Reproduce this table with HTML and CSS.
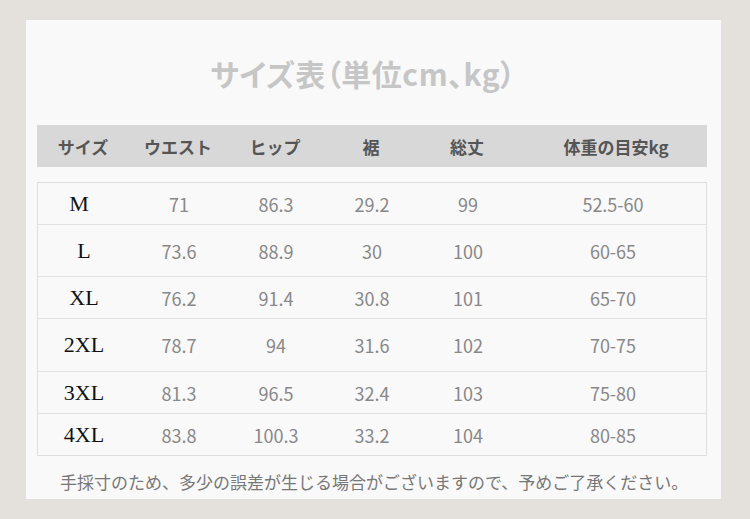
FILE: index.html
```html
<!DOCTYPE html>
<html lang="ja">
<head>
<meta charset="utf-8">
<title>サイズ表</title>
<link rel="stylesheet" href="styles.css">
</head>
<body>
<div class="card">
  <h1 class="title">サイズ表（単位cm、kg）</h1>
  <div class="head">
    <div>サイズ</div><div>ウエスト</div><div>ヒップ</div><div>裾</div><div>総丈</div><div class="w">体重の目安kg</div>
  </div>
  <div class="table">
    <div class="row"><div class="size m">M</div><div>71</div><div>86.3</div><div>29.2</div><div>99</div><div class="w">52.5-60</div></div>
    <div class="row tall"><div class="size">L</div><div>73.6</div><div>88.9</div><div>30</div><div>100</div><div class="w">60-65</div></div>
    <div class="row"><div class="size">XL</div><div>76.2</div><div>91.4</div><div>30.8</div><div>101</div><div class="w">65-70</div></div>
    <div class="row tall"><div class="size">2XL</div><div>78.7</div><div>94</div><div>31.6</div><div>102</div><div class="w">70-75</div></div>
    <div class="row"><div class="size">3XL</div><div>81.3</div><div>96.5</div><div>32.4</div><div>103</div><div class="w">75-80</div></div>
    <div class="row last"><div class="size">4XL</div><div>83.8</div><div>100.3</div><div>33.2</div><div>104</div><div class="w">80-85</div></div>
  </div>
  <p class="note">手採寸のため、多少の誤差が生じる場合がございますので、予めご了承ください。</p>
</div>
</body>
</html>
```

FILE: styles.css
```css
html, body {
  margin: 0;
  padding: 0;
}
body {
  background: #e4e0dc;
  width: 750px;
  height: 519px;
  overflow: hidden;
  font-family: "Noto Sans CJK JP", "Noto Sans", sans-serif;
}
.card {
  margin: 20px 0 0 26px;
  width: 695px;
  height: 479px;
  box-sizing: border-box;
  padding: 0 14px 0 11px;
  background: #f9f9f9;
}
.title {
  margin: 0;
  height: 105px;
  display: flex;
  align-items: center;
  justify-content: center;
  padding-right: 18px;
  font-size: 30px;
  font-weight: 700;
  color: #c6c6c6;
  font-feature-settings: "palt";
  letter-spacing: 0.5px;
}
.head, .row {
  display: grid;
  grid-template-columns: 92px 98px 96px 96px 96px 1fr;
  align-items: center;
  text-align: center;
}
.head {
  height: 42px;
  background: #d8d8d8;
  color: #555;
  font-weight: 700;
  font-size: 17px;
}
.head .w {
  padding-left: 10px;
}
.table {
  margin-top: 15px;
  border: 1px solid #dedede;
}
.row {
  height: 42px;
  box-sizing: border-box;
  border-bottom: 1px solid #e2e2e2;
  color: #888;
  font-size: 18px;
}
.row.tall {
  height: 52px;
}
.row.tall:nth-child(4) {
  height: 53px;
}
.row.last {
  height: 41px;
  border-bottom: 0;
}
.size {
  font-family: "Liberation Serif", serif;
  color: #111;
  font-size: 22px;
}
.size.m {
  padding-right: 10px;
}
.row .w {
  padding-left: 4px;
}
.note {
  margin: 0;
  padding: 16px 0 0 23px;
  line-height: 20px;
  font-size: 17px;
  color: #777;
}
```
